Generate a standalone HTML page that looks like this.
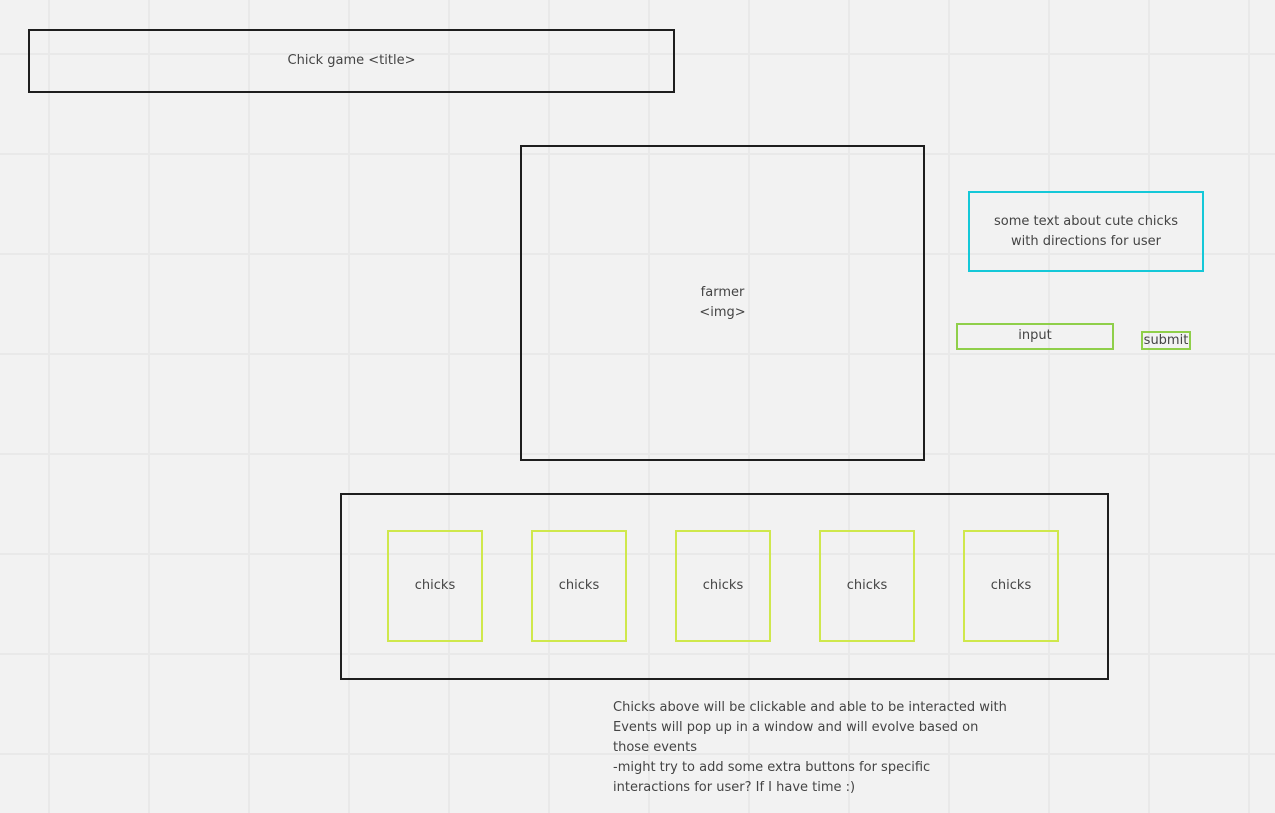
<!DOCTYPE html>
<html><head><meta charset="utf-8"><style>
html,body{margin:0;padding:0}
body{width:1275px;height:813px;position:relative;overflow:hidden;background-color:#f2f2f2;
background-image:linear-gradient(to right,#e9e9e9 2px,transparent 2px),linear-gradient(to bottom,#e9e9e9 2px,transparent 2px);
background-size:100px 100px;background-position:48px 53px;
font-family:"DejaVu Sans","Liberation Sans",sans-serif;color:#444;font-size:13px}
.b{position:absolute;box-sizing:border-box;display:flex;align-items:center;justify-content:center;text-align:center;line-height:20px}
.k{border:2px solid #1e1e1e}
.c{border:2px solid #cfe84c}
.g{border:2px solid #8fcf4a}
</style></head><body>
<div class="b k" style="left:28px;top:29px;width:647px;height:64px">Chick game &lt;title&gt;</div>
<div class="b k" style="left:520px;top:145px;width:405px;height:316px">farmer<br>&lt;img&gt;</div>
<div class="b" style="left:968px;top:191px;width:236px;height:81px;border:2px solid #14c8d8">some text about cute chicks<br>with directions for user</div>
<div class="b g" style="left:956px;top:323px;width:158px;height:27px;align-items:flex-start;line-height:20px;padding-top:1px">input</div>
<div class="b g" style="left:1141px;top:331px;width:50px;height:19px;line-height:16px;padding-top:1px">submit</div>
<div class="b k" style="left:340px;top:493px;width:769px;height:187px"></div>
<div class="b c" style="left:387px;top:530px;width:96px;height:112px">chicks</div>
<div class="b c" style="left:531px;top:530px;width:96px;height:112px">chicks</div>
<div class="b c" style="left:675px;top:530px;width:96px;height:112px">chicks</div>
<div class="b c" style="left:819px;top:530px;width:96px;height:112px">chicks</div>
<div class="b c" style="left:963px;top:530px;width:96px;height:112px">chicks</div>
<div style="position:absolute;left:613px;top:698px;line-height:20px;white-space:nowrap">Chicks above will be clickable and able to be interacted with<br>Events will pop up in a window and will evolve based on<br>those events<br>-might try to add some extra buttons for specific<br>interactions for user? If I have time :)</div>
</body></html>
